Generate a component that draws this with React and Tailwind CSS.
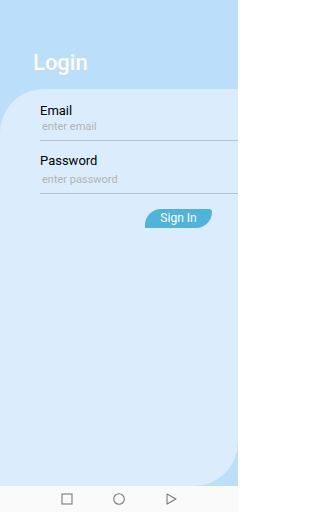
import React from 'react';

// 登录页面
const Field = ({ label, placeholder, className = '', gap = 'mt-[2px]' }) => (
  <div className={className}>
    <div className="text-[13px] leading-[15px] text-black">{label}</div>
    <div className={`${gap} pb-[7px] text-[11px] leading-[13px] text-[#b3b3b3] border-b-[1.5px] border-[#b6c3cd]`}>
      <span className="ml-[2px]">{placeholder}</span>
    </div>
  </div>
);

const NavBar = () => (
  <div className="h-[26px] bg-[#fafafa] flex items-center justify-center gap-[40px]">
    <svg width="12" height="12" viewBox="0 0 12 12" fill="none" stroke="#7a7a7a" strokeWidth="1.1">
      <rect x="1" y="1" width="10" height="10" />
    </svg>
    <svg width="12" height="12" viewBox="0 0 12 12" fill="none" stroke="#7a7a7a" strokeWidth="1.1">
      <circle cx="6" cy="6" r="5.3" />
    </svg>
    <svg width="12" height="12" viewBox="0 0 12 12" fill="none" stroke="#7a7a7a" strokeWidth="1.1">
      <path d="M2 1 L11 6 L2 11 Z" strokeLinejoin="round" />
    </svg>
  </div>
);

export default function App() {
  return (
    <div className="w-[238px] h-[512px] flex flex-col bg-[#bbdefa] font-['Roboto',sans-serif]">
      <div className="h-[89px] pl-[33px] pt-[50px]">
        <h1 className="text-[22px] leading-[26px] font-medium text-white">Login</h1>
      </div>

      <div className="flex-1 bg-[#dbedfc] rounded-tl-[44px] rounded-br-[44px] pt-[14px] pl-[40px]">
        <Field label="Email" placeholder="enter email" />
        <Field label="Password" placeholder="enter password" className="mt-[12px]" gap="mt-[5px]" />

        <div className="flex justify-end pr-[26px] mt-[15px]">
          <button className="w-[67px] h-[19px] bg-[#4fb3db] text-white text-[12px] leading-[19px] rounded-tl-[16px] rounded-br-[16px] rounded-tr-[3px]">
            Sign In
          </button>
        </div>
      </div>

      <NavBar />
    </div>
  );
}
